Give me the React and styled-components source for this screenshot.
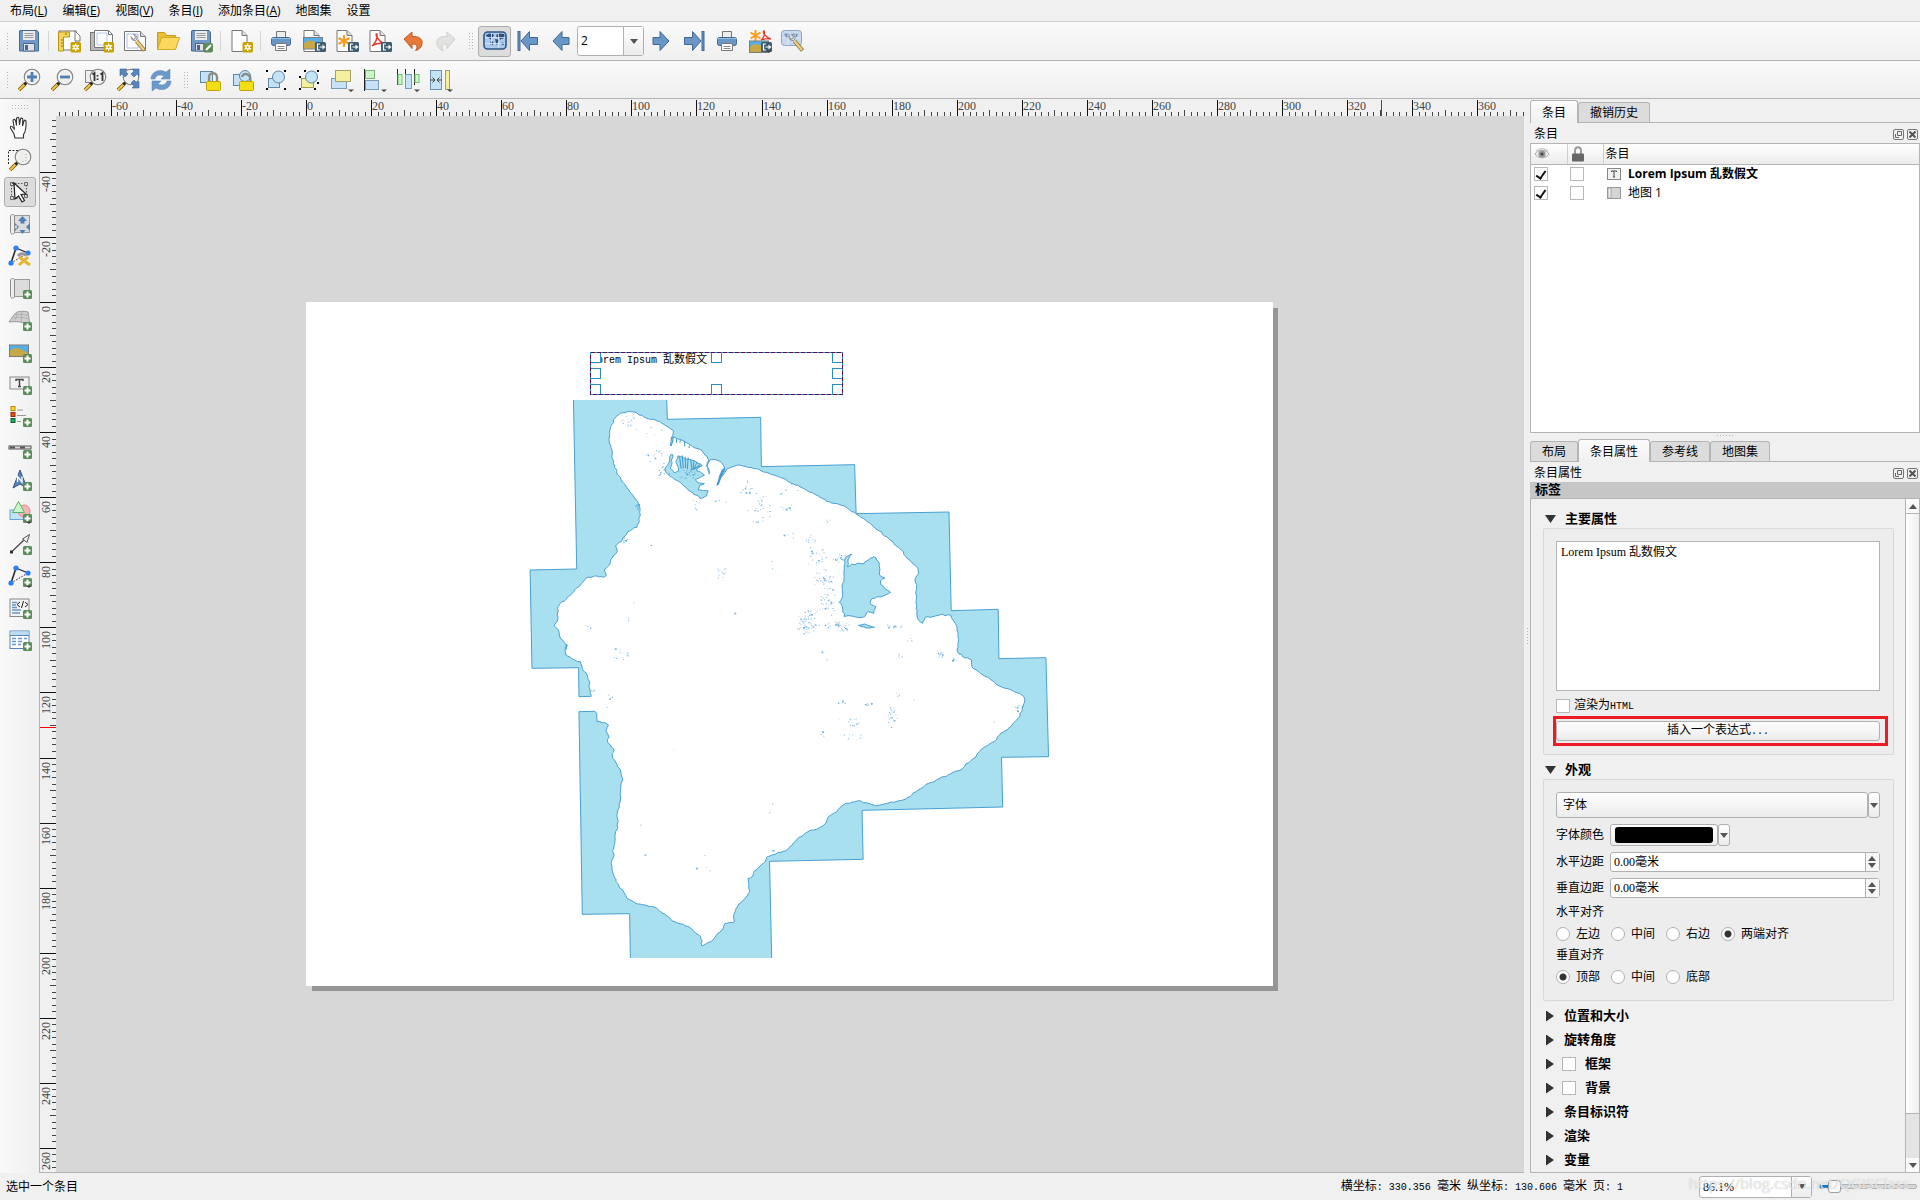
import React, { useState } from 'react'
import styled, { createGlobalStyle, css } from 'styled-components'

const PX_PER_MM = 3.2536

// small seeded generator so the map looks the same on every render
const makeRandom = (seed) => {
  let s = seed
  return () => {
    s = (s * 16807) % 2147483647
    return s / 2147483647
  }
}

const parse = (text) => text.trim().split(/\s+/).map((p) => p.split(',').map(Number))

const roughen = (points, seed, amount) => {
  const rnd = makeRandom(seed)
  const out = []
  for (let i = 0; i < points.length - 1; i += 1) {
    const [x1, y1] = points[i]
    const [x2, y2] = points[i + 1]
    const steps = Math.max(1, Math.round(Math.hypot(x2 - x1, y2 - y1) / 7))
    out.push([x1, y1])
    for (let k = 1; k < steps; k += 1) {
      const t = k / steps
      out.push([
        Math.round(x1 + (x2 - x1) * t + (rnd() - 0.5) * amount),
        Math.round(y1 + (y2 - y1) * t + (rnd() - 0.5) * amount),
      ])
    }
  }
  out.push(points[points.length - 1])
  return out
}

const toPath = (points) => `M${points.map((p) => p.join(' ')).join('L')}Z`

const COAST = parse(`
  246,1066 243,1050 242,1030 235,1005 222,985 216,964 205,962 190,952 178,945 176,935 181,915 172,905
  163,895 160,885 156,868 146,858 154,845 156,830 155,805 163,790 178,778 190,765 205,745 225,725
  235,712 255,708 280,712 287,706 281,690 298,668 305,648 317,632 312,618 330,600 345,575 370,562
  376,545 378,505 372,485 350,455 330,425 315,395 306,370 302,330 295,305 298,265 310,235 325,220
  345,214 362,216 375,225 400,236 430,244 455,262 468,272 466,290 462,318 469,291 480,297 500,306
  520,320 540,328 560,350 564,360 558,378 565,402 560,376 568,358 580,358 595,364 607,384 594,405
  586,436 600,408 612,387 630,380 645,375 665,380 705,392 740,405 775,422 810,440 850,463 890,485
  930,498 962,522 1000,550 1020,570 1045,590 1065,612 1090,635 1100,655 1125,680 1131,700 1122,715
  1125,740 1124,790 1128,835 1142,850 1148,832 1170,830 1190,824 1218,826 1230,850 1238,880
  1236,935 1250,950 1274,960 1275,980 1305,1005 1350,1038 1390,1055 1410,1065 1418,1078 1412,1100
  1405,1128 1380,1160 1350,1185 1338,1202 1300,1228 1280,1255 1258,1272 1248,1288 1210,1305
  1158,1330 1125,1355 1095,1378 1070,1385 1035,1393 1015,1398 990,1388 965,1383 930,1393 910,1415
  890,1428 875,1455 855,1468 835,1473 808,1492 790,1515 770,1533 745,1542 720,1552 712,1570
  690,1590 682,1610 670,1616 674,1655 660,1678 645,1692 633,1720 630,1748 608,1750 600,1770
  580,1792 570,1805 546,1818 542,1790 520,1770 495,1752 470,1745 440,1720 422,1703 370,1692
  342,1674 335,1658 313,1625 302,1585 302,1560 308,1545 303,1532 310,1510 312,1475 318,1460
  317,1420 325,1380 326,1335 332,1320 325,1290 303,1248 308,1230 292,1210 292,1185 286,1172
  293,1155 280,1147 262,1145 261,1120 256,1114`)

const OUTER = parse(`
  213,1115 222,1723 350,1721 352,1860 734,1860 728,1564 981,1558 978,1411 1358,1401 1355,1252
  1482,1250 1475,953 1348,956 1346,808 1219,812 1213,516 962,521 958,374 706,380 704,232 452,238
  450,172 198,172 207,687 81,690 86,985 212,983 213,1070 246,1069`)

const LAKES = [
  '463,342 455,370 445,388 455,405 490,430 515,455 540,475 558,468 562,452 535,450 540,435 552,430 535,428 528,418 552,405 540,395 530,390 546,378 525,362 480,348 475,365 482,392 470,398 460,385 467,345 463,342',
  '932,670 935,650 950,642 942,655 938,680 965,670 982,672 1000,655 1010,650 1023,665 1025,705 1040,715 1028,722 1030,735 1055,758 1035,768 1005,775 1000,790 1015,800 1010,820 995,815 985,830 970,833 950,828 930,830 925,800 917,785 926,768 924,740 930,710 932,670',
  '968,856 985,852 1012,862 990,864 968,856',
].map(parse)

// cx, cy, rx, ry, count
const SPECKS = [
  [345, 240, 22, 24, 14], [400, 270, 40, 30, 6], [405, 345, 40, 40, 14], [440, 390, 22, 30, 14],
  [510, 400, 36, 18, 26], [530, 490, 14, 22, 7], [590, 485, 25, 15, 3], [665, 440, 16, 26, 14],
  [700, 500, 36, 50, 28], [770, 510, 28, 20, 13], [770, 445, 50, 25, 6], [690, 545, 14, 8, 5],
  [885, 540, 20, 10, 4], [780, 590, 25, 20, 4], [840, 600, 30, 40, 12], [860, 650, 30, 30, 15],
  [915, 655, 18, 18, 22], [875, 720, 30, 36, 40], [880, 790, 36, 40, 32], [825, 845, 30, 38, 56],
  [890, 860, 60, 16, 24], [930, 866, 18, 6, 10], [1065, 858, 26, 12, 10], [1070, 945, 16, 12, 6],
  [1188, 944, 12, 10, 12], [1224, 960, 8, 5, 8], [1105, 905, 12, 16, 3], [600, 698, 22, 22, 12],
  [250, 855, 28, 18, 4], [320, 940, 34, 30, 12], [345, 838, 4, 6, 3], [360, 787, 2, 2, 1],
  [735, 690, 6, 60, 2], [870, 935, 3, 3, 4], [880, 958, 3, 3, 2], [250, 1050, 6, 10, 5],
  [300, 1090, 26, 30, 4], [925, 1088, 26, 8, 6], [995, 1090, 14, 8, 6], [1056, 1130, 16, 44, 20],
  [950, 1145, 36, 20, 12], [955, 1190, 28, 14, 8], [870, 1170, 18, 28, 3], [1070, 1060, 12, 12, 4],
  [1400, 1100, 16, 14, 8], [1332, 1144, 2, 2, 1], [735, 1530, 6, 8, 5], [550, 1570, 30, 50, 4],
  [735, 1400, 26, 30, 3], [380, 1455, 3, 3, 1], [390, 1543, 2, 2, 1], [466, 1228, 2, 2, 1],
  [372, 495, 8, 16, 10], [336, 598, 8, 10, 10], [177, 918, 6, 12, 10], [910, 848, 8, 12, 14],
  [410, 615, 5, 4, 2], [600, 395, 6, 14, 12], [1118, 1078, 2, 2, 1], [634, 818, 2, 2, 1],
]

const buildSpecks = () => {
  const rnd = makeRandom(4217)
  const dots = []
  SPECKS.forEach(([cx, cy, rx, ry, n]) => {
    for (let i = 0; i < n; i += 1) {
      dots.push({
        x: Math.round(cx + (rnd() + rnd() - 1) * rx),
        y: Math.round(cy + (rnd() + rnd() - 1) * ry),
        s: rnd() > 0.88 ? 5 : 3,
        o: 0.25 + rnd() * 0.55,
      })
    }
  })
  return dots
}

const WATER = toPath([...OUTER, ...roughen(COAST, 77, 4)])
const LAKE_PATHS = LAKES.map((l, i) => toPath(roughen(l, 11 + i, 4)))
const DOTS = buildSpecks()

/* ---------- icons ---------- */

const Svg = ({ children, size = 24 }) => (
  <svg width={size} height={size} viewBox="0 0 24 24" fill="none" aria-hidden="true">
    {children}
  </svg>
)

const Plus = () => (
  <g>
    <rect x="15" y="14" width="9" height="9" rx="1.5" fill="#5a8c57" />
    <path d="M19.5 15.5v6M16.5 18.5h6" stroke="#fff" strokeWidth="2" />
  </g>
)
const Star = () => (
  <g>
    <rect x="13.5" y="13" width="10.5" height="10.5" rx="1.5" fill="#c8a300" />
    <path d="M18.7 14.5v7.5M15.5 16.3l6.5 4M22 16.3l-6.5 4" stroke="#fff" strokeWidth="1.4" />
    <circle cx="18.7" cy="18.3" r="2.2" fill="#fff" />
    <circle cx="18.7" cy="18.3" r="1" fill="#c8a300" />
  </g>
)
const Export = () => (
  <g>
    <rect x="13" y="13" width="11" height="10" rx="1.5" fill="#3f5d70" />
    <path d="M18 15h-2.5v6h2.5M17.5 18h4.5" stroke="#fff" strokeWidth="1.2" />
    <path d="M20.5 15.5l3 2.5-3 2.5z" fill="#fff" />
  </g>
)
const Sheet = ({ x = 2 }) => (
  <g>
    <path d={`M${x} 1.5h10l5 5v16h-15z`} fill="#fff" stroke="#777" />
    <path d={`M${x + 10} 1.5v5h5`} fill="#ddd" stroke="#777" />
  </g>
)
const Wrench = () => (
  <g>
    <path d="M8 7.5c0 3 2 4.5 4.5 4l1.5-1.5c.5-2.5-.7-4.5-3.5-4.5l2 2.3-.7 2-1.8.6z" fill="#e4e4e4" stroke="#777" strokeWidth=".8" />
    <path d="M13.5 12l8 9.5" stroke="#8a7440" strokeWidth="4" />
    <path d="M13.5 12l7.5 9" stroke="#f0cf78" strokeWidth="2.4" />
  </g>
)
const Lens = () => (
  <g>
    <path d="M8.5 15.5L2 22" stroke="#6b5310" strokeWidth="3.6" />
    <path d="M7.5 16.5L2 22" stroke="#f4c23c" strokeWidth="2.2" />
    <path d="M10 14l-2.5 2.5" stroke="#222" strokeWidth="2.6" />
    <circle cx="15" cy="9" r="7.7" fill="#eeeeec" stroke="#888a85" strokeWidth="1.3" />
    <circle cx="15" cy="9" r="6.4" stroke="#fff" strokeWidth=".8" />
  </g>
)
const Nodes = () => (
  <g>
    <path d="M8 4l12 5" stroke="#222" strokeWidth="1.2" />
    <path d="M8 4L3 19" stroke="#222" strokeWidth="1.5" />
    <path d="M3 19L20 9" stroke="#222" strokeDasharray="1.5 1.5" />
    <g fill="#2b7fff">
      <circle cx="8" cy="4" r="2.6" />
      <circle cx="20" cy="9" r="2.6" />
      <circle cx="3" cy="19" r="2.6" />
    </g>
  </g>
)
const Arrow = ({ flip, bar }) => (
  <Svg>
    <g transform={flip ? 'matrix(-1 0 0 1 24 0)' : undefined}>
      <path d={bar ? 'M21.5 8.5h-8v-6L5 12l8.5 9.5v-6h8z' : 'M20 8.5h-7v-6L4 12l9 9.5v-6h7z'} fill="#6896c6" stroke="#41668f" />
      {bar && <path d="M3 2v20" stroke="#41668f" strokeWidth="3" />}
      {bar && <path d="M3 3v18" stroke="#6896c6" />}
    </g>
  </Svg>
)
const Printer = () => (
  <Svg>
    <path d="M7.5 2.5h9v7h-9z" fill="#eee" stroke="#777" />
    <rect x="2.5" y="8.5" width="19" height="8" rx="2" fill="#6896c6" stroke="#41668f" />
    <path d="M3 9.5h18" stroke="#9bbbe0" />
    <path d="M6.5 14.5h11v7h-11z" fill="#fff" stroke="#777" />
    <path d="M8.5 17.5h7M8.5 19.5h7" stroke="#888" />
  </Svg>
)
const Floppy = ({ edit }) => (
  <Svg>
    <path d="M3 1.5h17l1.5 2v18.5h-19v-20z" fill="#6f98c6" stroke="#48678c" />
    <path d="M6 2h12v9h-12z" fill="#ececec" />
    <path d="M7.5 4.5h9M7.5 6.5h9M7.5 8.5h9" stroke="#999" />
    <path d="M6.5 14.5h11v7.5h-11z" fill="#e2e2e2" stroke="#48678c" />
    <path d="M8 16h3v5h-3z" fill="#48678c" />
    {edit && <rect x="14" y="14" width="10" height="9.5" rx="2" fill="#5a8c57" />}
    {edit && <path d="M17 21l5-5" stroke="#fff" strokeWidth="2" />}
  </Svg>
)
const Picture = ({ y = 5 }) => (
  <g>
    <rect x="1.5" y={y} width="19" height="11.5" fill="#56aee8" stroke="#7a7a7a" />
    <path d={`M2 ${y + 6}c5-5 8-3 18 2v3h-18z`} fill="#c8a846" />
  </g>
)
const WorldMap = () => (
  <g>
    <rect x="1" y="3" width="22" height="17" rx="3.5" fill="#a9c9ee" stroke="#2f5788" strokeWidth="1.6" />
    <path d="M3 6l3-1.5 4 .5 1 2-2 1.5-1 2-1.500-.5-1-2-2-.5zM7.500 12l3 1-.5 2-1.500 3-1-3zM13 6l3-1.500 5 .5.500 2-1.500 3-1.500-.5-1 1.500-1.500-2.500-2 .5zM12 10l3.500.5.5 1.500-1.500 2-.5 2.500-1-2.500zM18.500 13.500l2.500.5-.5 2-2-.5z" fill="#2f4f78" />
    <path d="M2 8.5h20M2 14.5h20M8.5 4v15M15.5 4v15" stroke="#e6f1ff" strokeWidth=".7" />
  </g>
)
const Roll = () => (
  <g>
    <rect x="5.5" y="3.5" width="16" height="17" fill="#dcdcdc" stroke="#999" />
    <path d="M2.5 4c0-2 4-2 4 0v16.5c0 2-4 2-4 0z" fill="#eee" stroke="#8c8c8c" />
  </g>
)
const DropMark = () => <path d="M18 21.5h6l-3 2.5z" fill="#444" />

const icons = {
  save: <Floppy />,
  newLayout: <Svg><rect x="2" y="2" width="17" height="19" fill="#fff" stroke="#777" /><path d="M18 2l5 5v5h-5z" fill="#fff" stroke="#777" /><path d="M1.5 3h11v5h-6v14h-5z" fill="#f3d45e" stroke="#b79416" /><path d="M4 11h2M4 14h2M4 17h2M9 4v2" stroke="#8a6d00" /><Star /></Svg>,
  duplicate: <Svg><rect x=".5" y="3.5" width="17" height="18" fill="#bbb" stroke="#777" /><path d="M4.5 1.5h14l4 4v13h-18z" fill="#fff" stroke="#777" /><path d="M7 4h10v12h-10z" stroke="#b5c6ee" /><path d="M18.5 1.5v4h4" stroke="#777" /><Star /></Svg>,
  manager: <Svg><path d="M1.5 2.5h16l5 5v14h-21z" fill="#fff" stroke="#777" /><path d="M4 5h11v14h-11z" stroke="#a9bdec" /><path d="M17.5 2.5v5h5" fill="#ddd" stroke="#777" /><Wrench /></Svg>,
  open: <Svg><path d="M1.5 20V3.5h7l2 3h9v13.5z" fill="#e8bf36" stroke="#c99b1c" /><path d="M1.5 20.5l4-12h18l-4 12z" fill="#fbd95e" stroke="#d3a82b" /></Svg>,
  saveAs: <Floppy edit />,
  newPage: <Svg><Sheet x={3} /><Star /></Svg>,
  print: <Printer />,
  exportImage: <Svg><Sheet x={2} /><Picture y={8.5} /><Export /></Svg>,
  exportSvg: <Svg><Sheet x={2} /><path d="M9 6v12M3.5 9l11 6M14.5 9l-11 6" stroke="#ff9a1f" strokeWidth="2" /><Export /></Svg>,
  exportPdf: <Svg><Sheet x={2} /><path d="M4 17c3-2 6-8 5-12-2-1-1 5 7 10-3-2-9 0-12 2z" stroke="#e8382c" strokeWidth="1.5" /><Export /></Svg>,
  undo: <Svg><path d="M3 10l8-7v4.5c7-.5 11 2.5 10 7.5-.5 3-3 6-6.5 6.5 2.5-3 2.5-7-3.5-6.5v4.5z" fill="#e6793a" stroke="#c45a1c" /></Svg>,
  redo: <Svg><path d="M21 10l-8-7v4.5c-7-.5-11 2.5-10 7.5.5 3 3 6 6.5 6.5-2.5-3-2.5-7 3.5-6.5v4.5z" fill="#e2e2e0" stroke="#cfcfcd" /></Svg>,
  atlas: <Svg><WorldMap /></Svg>,
  first: <Arrow bar />,
  prev: <Arrow />,
  next: <Arrow flip />,
  last: <Arrow flip bar />,
  exportAtlas: <Svg><path d="M7.5 1v11M2.5 3.5l10 6M12.5 3.5l-10 6" stroke="#ff9a1f" strokeWidth="2" /><path d="M13 11c3-2 4-6 3-9-2 1 1 6 7 8-3-1-7 0-10 1z" stroke="#e8382c" strokeWidth="1.4" /><Picture y={12} /><Export /><DropMark /></Svg>,
  atlasSettings: <Svg><rect x=".5" y="1.5" width="20" height="15" rx="3" fill="#c5d8f0" stroke="#8ea5c8" /><path d="M3 5l4-1 2 2-3 4zM12 4l5 1-1 3-3 1z" fill="#7e95b8" /><path d="M1 9h19M7 2v14M14 2v14" stroke="#eef" strokeWidth=".8" /><Wrench /></Svg>,
  zoomIn: <Svg><Lens /><path d="M15 4v10M10 9h10" stroke="#4f7fb5" strokeWidth="2.8" /></Svg>,
  zoomOut: <Svg><Lens /><path d="M10 9h10" stroke="#4f7fb5" strokeWidth="2.8" /></Svg>,
  zoomActual: <Svg><path d="M2.5 2.5h12v12h-12z" fill="#eee" stroke="#888" /><Lens /><path d="M9.5 6.5l2-1.5v8M17.5 6.5l2-1.5v8M14.5 7v1.5M14.5 10.5v1.5" stroke="#333" strokeWidth="1.8" /></Svg>,
  zoomFull: <Svg><Lens /><g fill="#5585bb" stroke="#3f6696" strokeWidth=".6"><path d="M4 1h7l-2 2 3 3-3 3-3-3-2 2z" /><path d="M23 1h-7l2 2-3 3 3 3 3-3 2 2z" /><path d="M23 20h-7l2-2-3-3 3-3 3 3 2-2z" /></g></Svg>,
  refresh: <Svg><path d="M2 11C2 4 10 0 17 4l4-3v10h-9l3-3C11 6 7 7 6 11zM22 13c0 7-8 11-15 7l-4 3V13h9l-3 3c4 2 8 1 9-3z" fill="#6b99cb" stroke="#5582b5" strokeWidth=".5" /></Svg>,
  lock: <Svg><rect x="2.5" y="3.5" width="12" height="11" fill="#c5e3f8" stroke="#5d86a0" /><path d="M11 13V9c0-5 8-5 8 0v4" stroke="#8d8d88" strokeWidth="2.4" /><rect x="8.5" y="13.5" width="14" height="9" rx="1" fill="#f2dd17" stroke="#c0a400" /></Svg>,
  unlock: <Svg><rect x="2.5" y="6.5" width="10" height="11" fill="#c5e3f8" stroke="#5d86a0" /><circle cx="14" cy="8" r="5.5" fill="#c5e3f8" stroke="#5d86a0" /><path d="M11 9c1-5 9-4 8.5 4" stroke="#8d8d88" strokeWidth="2.4" /><rect x="8.5" y="13.5" width="14" height="9" rx="1" fill="#f2dd17" stroke="#c0a400" /></Svg>,
  group: <Svg><rect x="4.5" y="10.5" width="11" height="9" fill="#c5e3f8" stroke="#5d86a0" /><circle cx="14.5" cy="9" r="6" fill="#c5e3f8" stroke="#5d86a0" /><path d="M2 2h2v2h-2zM20 2h2v2h-2zM2 20h2v2h-2zM20 20h2v2h-2z" fill="#000" /></Svg>,
  ungroup: <Svg><rect x="4.5" y="10.5" width="12" height="9" fill="#f4ef9e" stroke="#a19b4a" /><circle cx="14.5" cy="9" r="6" fill="#c5e3f8" stroke="#5d86a0" /><path d="M7 2h2v2h-2zM20 2h2v2h-2zM2 8h2v2h-2zM20 14h2v2h-2zM2 20h2v2h-2zM17 20h2v2h-2z" fill="#000" /></Svg>,
  raise: <Svg><rect x="1.5" y="10.5" width="15" height="10" fill="#c5e3f8" stroke="#7b9bb2" /><rect x="5.5" y="2.5" width="15" height="11" fill="#f4ef9e" stroke="#a5a06a" /><DropMark /></Svg>,
  align: <Svg><path d="M1.5 1v22" stroke="#222" /><rect x="2.5" y="2.5" width="9" height="8" fill="#c9f7c8" stroke="#7cb07c" /><rect x="2.5" y="12.5" width="13" height="9" fill="#c5e3f8" stroke="#7b9bb2" /><DropMark /></Svg>,
  distribute: <Svg><path d="M1.5 1v16M9.5 1v20M18.5 1v16" stroke="#222" /><rect x="2" y="6.5" width="4" height="10" fill="#c9f7c8" stroke="#6fc06f" /><rect x="9.5" y="6.5" width="6" height="14" fill="#c5e3f8" stroke="#7b9bb2" /><rect x="19" y="6.5" width="4" height="8" fill="#c9f7c8" stroke="#6fc06f" /><DropMark /></Svg>,
  resize: <Svg><rect x="1.5" y="2.5" width="11" height="19" fill="#c5e3f8" stroke="#6d93b0" /><path d="M1 12h4M13 12H9M3.5 9.5L6 12l-2.5 2.5M10.5 9.5L8 12l2.5 2.5" stroke="#444" /><rect x="16.5" y="2.5" width="4" height="19" fill="#f4ef9e" stroke="#a5a06a" /><DropMark /></Svg>,
  pan: <Svg><path d="M7 22l-1-4-3.5-6c-.5-2 1-2.5 2.5-.5l1.5 2L5 4.5c.5-1.5 2-1.5 2.5 0l1 5V2.500c.5-1.500 2.300-1.500 2.500 0l.5 6.500 1-6c.5-1.500 2.300-1 2.300.5l-.3 6.500 1.500-5c.6-1.300 2-1 2 .5 0 5 .5 9-2.500 13v3.500z" fill="#fff" stroke="#333" strokeWidth="1.1" /></Svg>,
  zoomTool: <Svg><path d="M.5 16V2.5H12" stroke="#222" strokeDasharray="2 1.5" /><Lens /><path d="M18 6v1M18 9v1M18 12v1M15 13v1" stroke="#aaa" /></Svg>,
  select: <Svg><path d="M4 3.5h13M3.5 5v12M18.5 5v11M5 18.5h12" stroke="#555" strokeDasharray="1.5 1.5" /><path d="M2.5 2.5h3v3h-3zM16.5 2.5h3v3h-3zM2.5 16.5h3v3h-3zM16.5 14.5h3v3h-3z" stroke="#666" /><path d="M6 3l12 11-5 .5 3.5 6-2.5 1.5-3.5-6L7 19z" fill="#fff" stroke="#222" strokeWidth="1.2" /></Svg>,
  moveContent: <Svg><Roll /><path d="M14.500 4l4.500 5h-2.500v2.500h-4V9H10zM14.500 22l-3-4h6zM7 11l4 4-4 4v-2.500h2v-3H7zM22 11v8l-4-4z" fill="#4f7fb5" /></Svg>,
  editNodes: <Svg><Nodes /><path d="M11 13l11 8M11 21l9-8" stroke="#e5b32c" strokeWidth="3" /><path d="M10 12c2-3 7-3 8 0" stroke="#999" strokeWidth="3" /></Svg>,
  addMap: <Svg><Roll /><Plus /></Svg>,
  add3d: <Svg><path d="M1 14c2-3 5-8 8-10 4-1 7-1 11 0 1 5 1 9 2 13-5-3-13-4-21-3z" fill="#d0d0d0" stroke="#999" /><path d="M9 4c0 5-2 8-3 10M14 3.5c0 5-1 7-1 11M4 10c5-1 12-1 17 1M7 7c4-1 10-1 14 1" stroke="#aaa" strokeWidth=".8" /><Plus /></Svg>,
  addPicture: <Svg><Picture y={5} /><Plus /></Svg>,
  addLabel: <Svg><rect x="2" y="5" width="19" height="12" fill="#f2f2f2" stroke="#888" /><path d="M8 9V7.5h7V9M11.5 8v6.5M10 14.5h3" stroke="#444" strokeWidth="1.4" /><Plus /></Svg>,
  addLegend: <Svg><rect x="3" y="2.5" width="4" height="4" fill="#ffdd22" stroke="#b8860b" /><rect x="3" y="8.5" width="4" height="4" fill="#ef4d16" stroke="#8f2a08" /><rect x="3" y="14.5" width="4" height="4" fill="#12b05a" stroke="#0a6030" /><path d="M9 6h6M9 11.5h9M9 17.5h4" stroke="#999" /><Plus /></Svg>,
  addScale: <Svg><rect x="1" y="10" width="22" height="3" fill="#ddd" stroke="#555" /><path d="M2 11.5h5M12 11.5h5" stroke="#555" strokeWidth="2" /><Plus /></Svg>,
  addNorth: <Svg><path d="M12 2l7 18-7-4-7 4z" fill="#5585bb" stroke="#33557f" /><path d="M9.5 14V8.5l4.5 5.5V8.5" stroke="#fff" strokeWidth="1.4" /><Plus /></Svg>,
  addShape: <Svg><rect x="2" y="10" width="16" height="9.5" fill="#c5e3f8" stroke="#6aa3d0" /><circle cx="16" cy="11" r="6" fill="#f6b5b5" stroke="#df8888" /><path d="M10.5 1.5l6 11H4.5z" fill="#c9f7c8" stroke="#57b26b" /><Plus /><DropMark /></Svg>,
  addArrow: <Svg><path d="M3.5 20L18 6" stroke="#444" strokeWidth="1.2" /><path d="M21.5 2.5l-7 4.5 4.5 3.5z" fill="#eee" stroke="#555" /><path d="M2 18.5h3v3H2z" fill="#333" /><Plus /></Svg>,
  addNode: <Svg><Nodes /><Plus /><DropMark /></Svg>,
  addHtml: <Svg><rect x="2" y="3" width="19" height="17.5" fill="#f3f3f3" stroke="#888" /><path d="M4 6.5h5M4 9h4M4 11.5h5M4 14h9M4 17h8" stroke="#6896c6" strokeWidth="1.4" /><path d="M12 6L9 8.5l3 2.5M17 6l3 2.5-3 2.5M15.5 5l-2 7" stroke="#222" /><Plus /></Svg>,
  addTable: <Svg><rect x="2" y="3" width="19" height="17.5" fill="#fff" stroke="#5585bb" /><path d="M2.5 3.5h18v4h-18z" fill="#bcdcf5" /><path d="M2 7.5h19" stroke="#5585bb" /><path d="M4 10.5h4M10 10.5h4M16 10.5h3M4 13.5h4M10 13.5h4M4 16.5h4M10 16.5h3" stroke="#6896c6" strokeWidth="1.4" /><Plus /></Svg>,
}

/* ---------- data ---------- */

const menus = [['布局', 'L'], ['编辑', 'E'], ['视图', 'V'], ['条目', 'I'], ['添加条目', 'A'], ['地图集'], ['设置']]

const layoutTools = [
  ['save', '保存项目'], null, ['newLayout', '新建布局'], ['duplicate', '复制布局'], ['manager', '布局管理器'],
  ['open', '打开'], ['saveAs', '另存为'], null, ['newPage', '添加页面'], null, ['print', '打印'],
  ['exportImage', '导出图像'], ['exportSvg', '导出SVG'], ['exportPdf', '导出PDF'], ['undo', '撤销'], ['redo', '重做'],
]
const atlasTools = [['next', '下一个'], ['last', '最后'], ['print', '打印地图集'], ['exportAtlas', '导出地图集'], ['atlasSettings', '地图集设置']]
const viewTools = [['zoomIn', '放大'], ['zoomOut', '缩小'], ['zoomActual', '100%'], ['zoomFull', '全图'], ['refresh', '刷新']]
const actionTools = [
  ['lock', '锁定'], ['unlock', '解锁'], ['group', '组合'], ['ungroup', '取消组合'],
  ['raise', '上移'], ['align', '对齐'], ['distribute', '分布'], ['resize', '调整大小'],
]
const sideTools = [
  ['pan', '平移'], ['zoomTool', '缩放'], ['select', '选择'], ['moveContent', '移动内容'], ['editNodes', '编辑节点'],
  ['addMap', '添加地图'], ['add3d', '添加3D地图'], ['addPicture', '添加图片'], ['addLabel', '添加标签'],
  ['addLegend', '添加图例'], ['addScale', '添加比例尺'], ['addNorth', '添加指北针'], ['addShape', '添加形状'],
  ['addArrow', '添加箭头'], ['addNode', '添加节点'], ['addHtml', '添加HTML'], ['addTable', '添加属性表'],
]
const collapsed = [
  ['位置和大小'], ['旋转角度'], ['框架', true], ['背景', true], ['条目标识符'], ['渲染'], ['变量'],
]

/* ---------- parts ---------- */

const Ruler = ({ vertical, origin, marker, from, to }) => {
  const size = vertical ? 16 : 17
  const ticks = []
  for (let mm = from; mm <= to; mm += 2) {
    const at = Math.round(origin + mm * PX_PER_MM)
    ticks.push({ mm, at, len: mm % 20 === 0 ? 16 : mm % 10 === 0 ? 6 : 4 })
  }
  return (
    <RulerSvg $vertical={vertical} shapeRendering="crispEdges">
      {ticks.map(({ mm, at, len }) => (
        <rect
          key={mm}
          x={vertical ? size - len : at}
          y={vertical ? at : size - len}
          width={vertical ? len : 1}
          height={vertical ? 1 : len}
          fill={len === 16 ? '#111' : '#444'}
        />
      ))}
      {ticks.filter((t) => t.len === 16).map(({ mm, at }) => (
        vertical
          ? <text key={mm} textAnchor="end" transform={`translate(10 ${at + 4}) rotate(-90)`}>{mm}</text>
          : <text key={mm} x={at + 1} y="11">{mm}</text>
      ))}
      <rect
        x={vertical ? 0 : marker}
        y={vertical ? marker : 1}
        width={vertical ? 16 : 1}
        height={vertical ? 1 : 16}
        fill="#f00"
      />
    </RulerSvg>
  )
}

const Tools = ({ items, active }) => items.map((item, i) => (
  item === null
    ? <Separator key={i} />
    : <ToolButton key={item[0]} type="button" aria-label={item[1]} $active={item[0] === active}>{icons[item[0]]}</ToolButton>
))

const DownArrow = () => (
  <svg width="8" height="5" viewBox="0 0 8 5" aria-hidden="true"><path d="M0 0h8L4 5z" fill="#555" /></svg>
)
const UpArrow = () => (
  <svg width="8" height="5" viewBox="0 0 8 5" aria-hidden="true"><path d="M0 5h8L4 0z" fill="#555" /></svg>
)

const DockTitle = ({ children }) => (
  <TitleRow>
    <span>{children}</span>
    <TitleButtons>
      <TitleButton type="button" aria-label="浮动">
        <svg width="7" height="7" viewBox="0 0 7 7" fill="none"><path d="M2.5.5h4v4h-4zM4 6.5H.5V3" stroke="#666" /></svg>
      </TitleButton>
      <TitleButton type="button" aria-label="关闭">
        <svg width="7" height="7" viewBox="0 0 7 7"><path d="M.5.5l6 6M6.5.5l-6 6" stroke="#555" strokeWidth="2" /></svg>
      </TitleButton>
    </TitleButtons>
  </TitleRow>
)

const Spin = ({ id, label }) => {
  const [value, setValue] = useState('0.00毫米')
  return (
    <FormRow>
      <label htmlFor={id}>{label}</label>
      <SpinBox>
        <input id={id} value={value} onChange={(e) => setValue(e.target.value)} />
        <SpinButtons>
          <button type="button" aria-label="增加"><UpArrow /></button>
          <button type="button" aria-label="减少"><DownArrow /></button>
        </SpinButtons>
      </SpinBox>
    </FormRow>
  )
}

const Radios = ({ name, options, initial }) => {
  const [picked, setPicked] = useState(initial)
  return (
    <RadioRow>
      {options.map((option) => (
        <RadioLabel key={option}>
          <Radio type="radio" name={name} checked={picked === option} onChange={() => setPicked(option)} />
          {option}
        </RadioLabel>
      ))}
    </RadioRow>
  )
}

const handles = [[0, 0], [121, 0], [242, 0], [0, 16], [242, 16], [0, 32], [121, 32], [242, 32]]

const App = () => {
  const [text, setText] = useState('Lorem Ipsum 乱数假文')

  return (
    <Window>
      <GlobalStyle />
      <MenuBar>
        {menus.map(([name, key]) => (
          <MenuItem key={name} type="button">{name}{key && <>(<u>{key}</u>)</>}</MenuItem>
        ))}
      </MenuBar>
      <Toolbar>
        <Grip $width={12} />
        <Tools items={layoutTools} />
        <Grip $width={16} />
        <Tools items={[['atlas', '预览地图集'], ['first', '第一个'], ['prev', '上一个']]} active="atlas" />
        <PageCombo>
          <input aria-label="页" defaultValue="2" />
          <button type="button" aria-label="选择页"><DownArrow /></button>
        </PageCombo>
        <Tools items={atlasTools} />
      </Toolbar>
      <Toolbar>
        <Grip $width={12} />
        <Tools items={viewTools} />
        <Grip $width={16} />
        <Tools items={actionTools} />
      </Toolbar>

      <Main>
        <SideBar>
          <SideGrip />
          {sideTools.map(([name, label]) => (
            <SideButton key={name} type="button" aria-label={label} $active={name === 'select'}>{icons[name]}</SideButton>
          ))}
        </SideBar>

        <View>
          <Corner />
          <Ruler origin={250} marker={1325} from={-76} to={374} />
          <Ruler vertical origin={186} marker={611} from={-56} to={266} />
          <Canvas>
            <Page>
              <MapItem viewBox="78 180 1408 1674" preserveAspectRatio="none">
                <path d={WATER} />
                {LAKE_PATHS.map((d) => <path key={d} d={d} />)}
                <g stroke="none" fill="#3f97cf">
                  {DOTS.map((p, i) => <rect key={i} x={p.x} y={p.y} width={p.s} height={p.s} opacity={p.o} />)}
                </g>
                <g fill="none" stroke="#3f97cf">
                  <path d="M463 290l-2 28M476 295l1 14M487 299l-1 9M498 303l1 16M512 316l-2 8M485 350l4 36M492 346l3 40M500 350l1 34M508 352l-2 36M515 358l3 28M524 362l-3 26M532 366l-8 22M541 372l-14 16M540 378l-26 12" />
                  <path d="M605 386l-8 20-9 28M601 392l-5 18" strokeWidth="2" />
                </g>
              </MapItem>
              <LabelItem>
                <span><Mono>Lorem Ipsum </Mono>乱数假文</span>
                <svg width="254" height="44" fill="none" shapeRendering="crispEdges">
                  {handles.map(([x, y]) => (
                    <rect key={`${x}-${y}`} x={x + 0.5} y={y + 0.5} width="10" height="10" fill="#fff" stroke="#2a8dc8" />
                  ))}
                  <rect x=".5" y=".5" width="252" height="42" stroke="#2a8dc8" />
                  <rect x=".5" y=".5" width="252" height="42" stroke="#5a0f4c" strokeDasharray="4 2" />
                </svg>
              </LabelItem>
            </Page>
          </Canvas>
        </View>

        <Splitter><i /></Splitter>

        <Dock>
          <TabBar role="tablist">
            <Tab type="button" role="tab" $active>条目</Tab>
            <Tab type="button" role="tab">撤销历史</Tab>
          </TabBar>
          <DockTitle>条目</DockTitle>
          <ItemList>
            <ItemTable>
              <thead>
                <tr>
                  <th>
                    <svg width="16" height="12" viewBox="0 0 16 12" fill="none" aria-label="可见">
                      <path d="M1 6c3-5 11-5 14 0-3 5-11 5-14 0z" fill="#eee" stroke="#aaa" />
                      <circle cx="8" cy="6" r="3.6" fill="#999" /><circle cx="8" cy="6" r="1.6" fill="#444" />
                      <path d="M2 3c3-3 9-3 12 0" stroke="#bbb" />
                    </svg>
                  </th>
                  <th>
                    <svg width="14" height="16" viewBox="0 0 14 16" fill="none" aria-label="锁定">
                      <path d="M4 8V5c0-5 6-5 6 0v3" stroke="#999" strokeWidth="2" />
                      <rect x="1" y="7.5" width="12" height="8" rx="1" fill="#666" />
                    </svg>
                  </th>
                  <th>条目</th>
                </tr>
              </thead>
              <tbody>
                <tr>
                  <td><CheckBox type="checkbox" defaultChecked aria-label="显示标签" /></td>
                  <td><CheckBox type="checkbox" aria-label="锁定标签" /></td>
                  <td>
                    <ItemName $bold>
                      <svg width="14" height="12" viewBox="0 0 14 12" fill="none"><rect x=".5" y=".5" width="13" height="11" fill="#f2f2f2" stroke="#888" /><path d="M4.5 4V3h5v1M7 3v6M6 9h2" stroke="#444" /></svg>
                      Lorem Ipsum 乱数假文
                    </ItemName>
                  </td>
                </tr>
                <tr>
                  <td><CheckBox type="checkbox" defaultChecked aria-label="显示地图" /></td>
                  <td><CheckBox type="checkbox" aria-label="锁定地图" /></td>
                  <td>
                    <ItemName>
                      <svg width="14" height="12" viewBox="0 0 14 12"><rect x=".5" y=".5" width="13" height="11" fill="#d4d4d4" stroke="#999" /><path d="M1 1h3v10H1z" fill="#eee" stroke="#999" strokeWidth=".8" /></svg>
                      地图 1
                    </ItemName>
                  </td>
                </tr>
              </tbody>
            </ItemTable>
          </ItemList>
          <RowSplitter><i /></RowSplitter>
          <TabBar role="tablist">
            <Tab type="button" role="tab">布局</Tab>
            <Tab type="button" role="tab" $active>条目属性</Tab>
            <Tab type="button" role="tab">参考线</Tab>
            <Tab type="button" role="tab">地图集</Tab>
          </TabBar>
          <DockTitle>条目属性</DockTitle>
          <ItemType>标签</ItemType>

          <ScrollArea>
            <ScrollContent>
              <SectionHeader><Triangle $open />主要属性</SectionHeader>
              <GroupBox>
                <TextBox aria-label="标签文字" value={text} onChange={(e) => setText(e.target.value)} />
                <CheckLabel><CheckBox type="checkbox" /><span>渲染为<Mono>HTML</Mono></span></CheckLabel>
                <Marked>
                  <PushButton type="button">插入一个表达式<Mono>...</Mono></PushButton>
                </Marked>
              </GroupBox>

              <SectionHeader $spaced><Triangle $open />外观</SectionHeader>
              <GroupBox>
                <SplitRow>
                  <FontButton type="button">字体</FontButton>
                  <DropButton type="button" aria-label="字体菜单"><DownArrow /></DropButton>
                </SplitRow>
                <FormRow>
                  <label htmlFor="font-color">字体颜色</label>
                  <SplitRow>
                    <ColorButton id="font-color" type="button"><i /></ColorButton>
                    <DropButton type="button" aria-label="颜色菜单"><DownArrow /></DropButton>
                  </SplitRow>
                </FormRow>
                <Spin id="margin-h" label="水平边距" />
                <Spin id="margin-v" label="垂直边距" />
                <Caption>水平对齐</Caption>
                <Radios name="align-h" options={['左边', '中间', '右边', '两端对齐']} initial="两端对齐" />
                <Caption>垂直对齐</Caption>
                <Radios name="align-v" options={['顶部', '中间', '底部']} initial="顶部" />
              </GroupBox>

              <CollapsedList>
                {collapsed.map(([name, check]) => (
                  <CollapsedRow key={name} $check={check}>
                    <Triangle />
                    {check ? <label><CheckBox type="checkbox" />{name}</label> : name}
                  </CollapsedRow>
                ))}
              </CollapsedList>
            </ScrollContent>
            <ScrollBar>
              <button type="button" aria-label="向上滚动"><UpArrow /></button>
              <ScrollThumb />
              <ScrollTrack />
              <button type="button" aria-label="向下滚动"><DownArrow /></button>
            </ScrollBar>
          </ScrollArea>
        </Dock>
      </Main>

      <StatusBar>
        <StatusHint>选中一个条目</StatusHint>
        <StatusCoords>
          横坐标<Mono>: 330.356 </Mono>毫米<Mono> </Mono>纵坐标<Mono>: 130.606 </Mono>毫米<Mono> </Mono>页<Mono>: 1</Mono>
        </StatusCoords>
        <ZoomCombo>
          <input aria-label="缩放" defaultValue="86.1%" />
          <button type="button" aria-label="选择缩放"><DownArrow /></button>
        </ZoomCombo>
        <ZoomSlider type="range" aria-label="缩放滑块" min="0" max="100" defaultValue="10" />
        <Watermark>https://blog.csdn.net/QGISClass</Watermark>
      </StatusBar>
    </Window>
  )
}

export default App

const GlobalStyle = createGlobalStyle`
  * {
    box-sizing: border-box;
  }
  body {
    margin: 0;
    background: #f0f0f0;
    color: #000;
    font: 12px/16px "Liberation Serif", "Noto Sans CJK SC", serif;
  }
  button, input, textarea {
    margin: 0;
    padding: 0;
    border: 0;
    background: none;
    color: inherit;
    font: inherit;
  }
  svg {
    display: block;
  }
`

const uiFont = css`
  font-family: "Open Sans", "Noto Sans CJK SC", sans-serif;
`

const raised = css`
  border: 1px solid #b0b0b0;
  border-radius: 3px;
  background: linear-gradient(#fefefe, #ececec);
`

const dots = css`
  background-image: radial-gradient(#b4b4b4 35%, transparent 40%);
  background-size: 3px 3px;
`

const Mono = styled.span`
  font-family: "Liberation Mono", monospace;
  font-size: 10px;
  white-space: pre;
`

const Window = styled.div`
  display: flex;
  flex-direction: column;
  height: 100vh;
  overflow: hidden;
`

const MenuBar = styled.nav`
  display: flex;
  gap: 15px;
  height: 22px;
  padding: 0 10px;
  border-bottom: 1px solid #d0d0d0;
  ${uiFont}
`

const MenuItem = styled.button`
  height: 21px;
  white-space: nowrap;
`

const Toolbar = styled.div`
  display: flex;
  align-items: center;
  height: 39px;
  border-bottom: 1px solid #b4b4b4;
  background: linear-gradient(#fafafa, #efefef);

  & + & {
    height: 38px;
  }
`

const Grip = styled.span`
  flex: 0 0 ${({ $width }) => $width}px;
  height: 18px;
  ${dots}
  background-clip: content-box;
  padding: 0 ${({ $width }) => ($width === 16 ? 5 : 3)}px 0 5px;
`

const Separator = styled.span`
  width: 1px;
  height: 20px;
  margin: 0 3px;
  background: #d4d4d4;
`

const ToolButton = styled.button`
  display: flex;
  align-items: center;
  justify-content: center;
  width: 33px;
  height: 31px;
  border: 1px solid ${({ $active }) => ($active ? '#adadad' : 'transparent')};
  border-radius: 3px;
  background: ${({ $active }) => ($active ? '#dcdcdc' : 'none')};
`

const SideButton = styled(ToolButton)`
  width: 32px;
  height: 30px;
  margin: 1px 0;
`

const ComboBox = styled.div`
  display: flex;
  border: 1px solid #b0b0b0;
  border-radius: 3px;
  background: #fff;

  input {
    flex: 1;
    min-width: 0;
    padding-left: 3px;
    outline: 0;
  }

  button {
    display: flex;
    align-items: center;
    justify-content: center;
    width: 20px;
    border-left: 1px solid #b0b0b0;
    background: linear-gradient(#fefefe, #ececec);
  }
`

const PageCombo = styled(ComboBox)`
  width: 67px;
  height: 30px;
  font-family: "Open Sans", sans-serif;
`

const ZoomCombo = styled(ComboBox)`
  width: 113px;
  height: 22px;
`

const Main = styled.main`
  display: flex;
  flex: 1;
  min-height: 0;
`

const SideBar = styled.aside`
  display: flex;
  flex-direction: column;
  align-items: center;
  width: 40px;
  border-right: 1px solid #b4b4b4;
  background: linear-gradient(to right, #fafafa, #efefef);
`

const SideGrip = styled.span`
  width: 18px;
  height: 6px;
  margin: 5px 0 2px;
  ${dots}
`

const View = styled.section`
  flex: 1;
  display: grid;
  grid-template: 17px 1fr / 16px 1fr;
  min-width: 0;
  border-bottom: 1px solid #b4b4b4;
`

const Corner = styled.div`
  background: #f0f0f0;
`

const RulerSvg = styled.svg`
  width: ${({ $vertical }) => ($vertical ? '16px' : '100%')};
  height: ${({ $vertical }) => ($vertical ? '100%' : '17px')};
  overflow: visible;

  text {
    fill: #444;
    font: 12px "Liberation Serif", serif;
  }
`

const Canvas = styled.div`
  position: relative;
  overflow: hidden;
  background: #d7d7d7;
`

const Page = styled.div`
  position: absolute;
  left: 250px;
  top: 186px;
  width: 967px;
  height: 684px;
  background: #fff;
  box-shadow: 5px 5px 0 #969696;

  &::before, &::after {
    content: '';
    position: absolute;
    background: #d7d7d7;
  }

  &::before {
    left: 100%;
    top: 5px;
    width: 5px;
    height: 1px;
  }

  &::after {
    left: 5px;
    top: 100%;
    width: 1px;
    height: 5px;
  }
`

const MapItem = styled.svg`
  position: absolute;
  left: 223px;
  top: 98px;
  width: 521px;
  height: 558px;

  path {
    vector-effect: non-scaling-stroke;
  }

  > path {
    fill: #a8e0ef;
    stroke: #4a9fd3;
  }
`

const LabelItem = styled.div`
  position: absolute;
  left: 284px;
  top: 50px;
  width: 254px;
  font-size: 11px;
  line-height: 14px;

  > span {
    position: absolute;
    left: 1px;
    top: 0;
    white-space: nowrap;
  }

  svg {
    position: relative;
  }
`

const Splitter = styled.div`
  display: flex;
  align-items: center;
  width: 6px;

  i {
    width: 3px;
    height: 18px;
    margin-left: 2px;
    ${dots}
  }
`

const RowSplitter = styled.div`
  display: flex;
  justify-content: center;
  height: 5px;

  i {
    width: 18px;
    height: 3px;
    margin-top: 1px;
    ${dots}
  }
`

const Dock = styled.aside`
  flex: 0 0 390px;
  display: flex;
  flex-direction: column;
  min-height: 0;
`

const TabBar = styled.div`
  display: flex;
  align-items: flex-end;
  height: 24px;
  border-bottom: 1px solid #b4b4b4;
`

const Tab = styled.button`
  height: ${({ $active }) => ($active ? 23 : 20)}px;
  margin-bottom: ${({ $active }) => ($active ? -1 : 0)}px;
  padding: 1px 11px 0;
  border: 1px solid #b4b4b4;
  border-bottom: 0;
  border-radius: 3px 3px 0 0;
  background: ${({ $active }) => ($active ? 'linear-gradient(#fcfcfc, #f0f0f0)' : '#dcdcdc')};
`

const TitleRow = styled.div`
  display: flex;
  align-items: center;
  justify-content: space-between;
  height: 20px;
  padding: 2px 2px 0 4px;
  ${uiFont}
`

const TitleButtons = styled.div`
  display: flex;
  gap: 3px;
`

const TitleButton = styled.button`
  display: flex;
  align-items: center;
  justify-content: center;
  width: 11px;
  height: 11px;
  border: 1px solid #777;
  border-radius: 2px;
`

const ItemList = styled.div`
  flex: 0 0 290px;
  border: 1px solid #b4b4b4;
  background: #fff;
`

const ItemTable = styled.table`
  width: 100%;
  table-layout: fixed;
  border-collapse: collapse;

  th {
    height: 20px;
    padding: 0 3px;
    border-bottom: 1px solid #b4b4b4;
    border-right: 1px solid #d0d0d0;
    background: linear-gradient(#fefefe, #ececec);
    font-weight: normal;
    text-align: left;
  }

  th:nth-child(-n + 2) {
    width: 36px;
  }

  th:last-child {
    padding-left: 2px;
    border-right: 0;
  }

  td {
    height: 19px;
    padding: 0 3px;
  }

  td:last-child {
    padding-left: 4px;
  }
`

const ItemName = styled.span`
  display: flex;
  align-items: center;
  gap: 7px;
  ${uiFont}
  font-weight: ${({ $bold }) => ($bold ? 'bold' : 'normal')};
`

const CheckBox = styled.input`
  appearance: none;
  display: block;
  flex: none;
  width: 14px;
  height: 14px;
  border: 1px solid #b8b8b8;
  background: #fff;

  &:checked::after {
    content: '';
    display: block;
    width: 4px;
    height: 8px;
    margin: 1px auto 0;
    border: solid #111;
    border-width: 0 2px 2px 0;
    transform: rotate(35deg);
  }
`

const ItemType = styled.div`
  height: 16px;
  padding-left: 5px;
  background: #c6c6c6;
  font-size: 13px;
  font-weight: bold;
`

const ScrollArea = styled.div`
  flex: 1;
  display: flex;
  min-height: 0;
  border: 1px solid #b4b4b4;
`

const ScrollContent = styled.div`
  flex: 1;
  min-width: 0;
  overflow: hidden;
  padding: 11px 11px 0 12px;
`

const SectionHeader = styled.h3`
  display: flex;
  align-items: center;
  gap: 9px;
  height: 18px;
  margin: ${({ $spaced }) => ($spaced ? 6 : 0)}px 0 0;
  padding-left: 2px;
  font-size: 13px;
  font-weight: bold;
`

const Triangle = styled.i`
  width: ${({ $open }) => ($open ? 11 : 8)}px;
  height: ${({ $open }) => ($open ? 8 : 11)}px;
  background: #333;
  clip-path: ${({ $open }) => ($open ? 'polygon(0 0, 100% 0, 50% 100%)' : 'polygon(0 0, 100% 50%, 0 100%)')};
`

const GroupBox = styled.div`
  display: flex;
  flex-direction: column;
  gap: 6px;
  padding: 12px 13px 16px 12px;
  border: 1px solid #d8d8d8;
  border-radius: 2px;
  background: #ededed;
`

const TextBox = styled.textarea`
  height: 150px;
  padding: 2px 4px;
  border: 1px solid #b4b4b4;
  background: #fff;
  resize: none;
  outline: 0;
`

const CheckLabel = styled.label`
  display: flex;
  align-items: center;
  gap: 4px;
  height: 18px;
`

const Marked = styled.div`
  margin: -5px -8px -8px -3px;
  padding: 2px 5px 2px 0;
  border: 3px solid #ed1c24;
`

const PushButton = styled.button`
  display: block;
  width: 100%;
  height: 20px;
  ${raised}
  line-height: 16px;
`

const SplitRow = styled.div`
  display: flex;
`

const FontButton = styled.button`
  flex: 1;
  height: 26px;
  padding-left: 6px;
  text-align: left;
  ${raised}
`

const DropButton = styled.button`
  display: flex;
  align-items: center;
  justify-content: center;
  width: 12px;
  ${raised}
`

const ColorButton = styled.button`
  width: 108px;
  height: 22px;
  padding: 2px 4px;
  ${raised}

  i {
    display: block;
    height: 16px;
    border-radius: 3px;
    background: #000;
  }
`

const FormRow = styled.div`
  display: flex;
  align-items: center;

  label {
    width: 54px;
  }
`

const SpinBox = styled.div`
  flex: 1;
  display: flex;
  height: 20px;
  border: 1px solid #b0b0b0;
  border-radius: 3px;
  background: #fff;

  input {
    flex: 1;
    min-width: 0;
    padding-left: 3px;
    outline: 0;
  }
`

const SpinButtons = styled.div`
  display: flex;
  flex-direction: column;
  justify-content: space-evenly;
  width: 14px;
  padding-left: 2px;
  border-left: 1px solid #b0b0b0;
  background: #f6f6f6;
`

const Caption = styled.div`
  height: 16px;
`

const RadioRow = styled.div`
  display: flex;
  gap: 11px;
`

const RadioLabel = styled.label`
  display: flex;
  align-items: center;
  gap: 6px;
  height: 15px;
`

const Radio = styled.input`
  appearance: none;
  width: 14px;
  height: 14px;
  border: 1px solid #b0b0b0;
  border-radius: 50%;
  background: #fff;

  &:checked {
    background: radial-gradient(#333 3px, #fff 4px);
  }
`

const CollapsedList = styled.div`
  margin-top: 3px;
`

const CollapsedRow = styled.div`
  display: flex;
  align-items: center;
  gap: ${({ $check }) => ($check ? 8 : 10)}px;
  height: 24px;
  padding-left: 3px;
  font-size: 13px;
  font-weight: bold;

  label {
    display: flex;
    align-items: center;
    gap: 9px;
  }
`

const ScrollBar = styled.div`
  display: flex;
  flex-direction: column;
  width: 14px;
  border-left: 1px solid #b4b4b4;
  background: #e4e4e4;

  button {
    display: flex;
    align-items: center;
    justify-content: center;
    height: 14px;
    background: #fbfbfb;
  }
`

const ScrollThumb = styled.div`
  flex: 1;
  border: solid #b4b4b4;
  border-width: 1px 0;
  background: linear-gradient(to right, #fff, #efefef);
`

const ScrollTrack = styled.div`
  height: 44px;
`

const StatusBar = styled.footer`
  position: relative;
  display: flex;
  align-items: center;
  height: 27px;
  padding: 0 3px 0 6px;
`

const StatusHint = styled.span`
  flex: 1;
  ${uiFont}
`

const StatusCoords = styled.span`
  margin-right: 76px;
`

const ZoomSlider = styled.input`
  appearance: none;
  width: 98px;
  height: 14px;
  margin-left: 7px;
  outline: 0;

  &::-webkit-slider-runnable-track {
    height: 5px;
    border: 1px solid #b4b4b4;
    border-radius: 2px;
    background: linear-gradient(to right, #0078d7 12%, #d8d8d8 12%);
  }

  &::-webkit-slider-thumb {
    appearance: none;
    width: 13px;
    height: 13px;
    margin-top: -5px;
    border: 1px solid #a0a0a0;
    border-radius: 3px;
    background: #fbfbfb;
  }
`

const Watermark = styled.span`
  position: absolute;
  right: 10px;
  top: 0;
  color: rgba(255, 255, 255, 0.75);
  font: 15px/20px "Open Sans", sans-serif;
  text-shadow: 0 0 1px rgba(140, 140, 140, 0.7);
  pointer-events: none;
`
